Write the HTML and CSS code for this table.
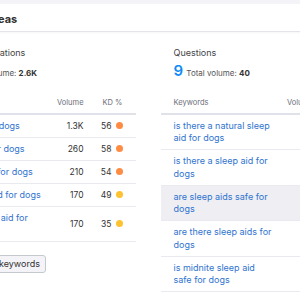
FILE: index.html
```html
<!DOCTYPE html>
<html lang="en">
<head>
    <meta charset="UTF-8">
    <meta name="viewport" content="width=device-width, initial-scale=1.0">
    <title>Keyword ideas</title>
    <link rel="stylesheet" href="styles.css">
</head>
<body>
    <!-- Keyword ideas widget -->
    <div class="widget">
        <div class="widget-head">
            <h2>Keyword ideas</h2>
        </div>

        <div class="widget-body">
            <!-- Variations column -->
            <section class="idea-col">
                <h3>Keyword Variations</h3>
                <div class="summary"><span class="count">38</span> Total volume: <b>2.6K</b></div>
                <table class="kw-table">
                    <colgroup>
                        <col class="col-kw">
                        <col class="col-vol">
                        <col class="col-kd">
                    </colgroup>
                    <thead>
                        <tr><th class="kw">Keywords</th><th class="num">Volume</th><th class="kd">KD %</th></tr>
                    </thead>
                    <tbody>
                        <tr><td class="kw"><a href="#">sleep aid for dogs</a></td><td class="num">1.3K</td><td class="kd">56<span class="dot orange"></span></td></tr>
                        <tr><td class="kw"><a href="#">sleep aids for dogs</a></td><td class="num">260</td><td class="kd">58<span class="dot orange"></span></td></tr>
                        <tr><td class="kw"><a href="#">sleeping aid for dogs</a></td><td class="num">210</td><td class="kd">54<span class="dot orange"></span></td></tr>
                        <tr><td class="kw"><a href="#">best sleep aid for dogs</a></td><td class="num">170</td><td class="kd">49<span class="dot yellow"></span></td></tr>
                        <tr><td class="kw"><a href="#">natural sleep aid for dogs</a></td><td class="num">170</td><td class="kd">35<span class="dot yellow"></span></td></tr>
                    </tbody>
                </table>
                <div class="all-btn">View all 38 keywords</div>
            </section>

            <!-- Questions column -->
            <section class="idea-col">
                <h3>Questions</h3>
                <div class="summary"><span class="count">9</span> Total volume: <b>40</b></div>
                <table class="kw-table">
                    <colgroup>
                        <col class="col-kw">
                        <col class="col-vol">
                        <col class="col-kd">
                    </colgroup>
                    <thead>
                        <tr><th class="kw">Keywords</th><th class="num">Volume</th><th class="kd">KD %</th></tr>
                    </thead>
                    <tbody>
                        <tr><td class="kw"><a href="#">is there a natural sleep aid for dogs</a></td><td class="num">10</td><td class="kd">n/a</td></tr>
                        <tr><td class="kw"><a href="#">is there a sleep aid for dogs</a></td><td class="num">10</td><td class="kd">n/a</td></tr>
                        <tr class="hover"><td class="kw"><a href="#">are sleep aids safe for dogs</a></td><td class="num">10</td><td class="kd">n/a</td></tr>
                        <tr><td class="kw"><a href="#">are there sleep aids for dogs</a></td><td class="num">10</td><td class="kd">n/a</td></tr>
                        <tr><td class="kw"><a href="#">is midnite sleep aid safe for dogs</a></td><td class="num">0</td><td class="kd">n/a</td></tr>
                    </tbody>
                </table>
            </section>
        </div>
    </div>
</body>
</html>
```

FILE: styles.css
```css
/* Page */
html, body {
    margin: 0;
    overflow: hidden;
}

body {
    padding-top: 4px;
    background: #f4f4f8;
    font-family: Inter, "Noto Sans", sans-serif;
    color: #333;
}

.widget {
    background: #fff;
    margin-left: -82.5px;
    width: 720px;
    min-height: 300px;
}

.widget-head {
    padding: 8px 20px 5px 20.5px;
    border-bottom: 1px solid #e4e5eb;
    box-shadow: 0 1px 2px rgba(0, 0, 0, 0.04);
}

.widget-head h2 {
    margin: 0;
    font-size: 11px;
    line-height: 14px;
    font-weight: 700;
    color: #333;
}

.widget-body {
    display: grid;
    grid-template-columns: repeat(3, 205px);
    column-gap: 25px;
    padding: 13.5px 13px 0;
}

/* Column heading + totals */
.idea-col h3 {
    margin: 0 0 0 13px;
    font-size: 9px;
    line-height: 13px;
    font-weight: 400;
    color: #444;
}

.summary {
    margin: 3px 0 0 13px;
    font-size: 8px;
    line-height: 18px;
    color: #555;
}

.summary .count {
    font-size: 15px;
    font-weight: 600;
    color: #0e8bf5;
    margin-right: 1px;
}

.summary b {
    color: #333;
}

/* Keyword table */
.kw-table {
    width: 205px;
    margin-top: 8px;
    border-collapse: collapse;
    table-layout: fixed;
}

.col-kw { width: 121px; }
.col-vol { width: 32px; }
.col-kd { width: 52px; }

.kw-table th {
    padding: 7px 0 5px;
    border-bottom: 2px solid #e0e1e9;
    font-size: 7.5px;
    line-height: 11px;
    font-weight: 400;
    color: #6c6e79;
    text-align: left;
}

.kw-table td {
    padding: 5px 0 4.5px;
    border-bottom: 1px solid #e9eaef;
    font-size: 8.5px;
    line-height: 12.5px;
    color: #333;
}

.kw-table .kw {
    padding-left: 13px;
    padding-right: 9px;
}

.kw-table .num {
    text-align: right;
}

.kw-table .kd {
    text-align: right;
    padding-right: 13px;
}

.kw-table td.kw a {
    font-size: 9px;
    color: #2f74d0;
    text-decoration: none;
}

.kw-table tr.hover td {
    background: #eeeef3;
}

.dot {
    display: inline-block;
    width: 7px;
    height: 7px;
    margin-left: 4px;
    border-radius: 50%;
    vertical-align: -0.5px;
}

.dot.orange { background: #ff8c43; }
.dot.yellow { background: #fdc232; }

/* View all button */
.all-btn {
    display: inline-block;
    margin: 13px 0 0 13px;
    padding: 0 5.5px;
    height: 16px;
    line-height: 16px;
    border: 1px solid #c6c8d0;
    border-radius: 3px;
    background: #f4f4f8;
    font-size: 9px;
    color: #333;
}
```
